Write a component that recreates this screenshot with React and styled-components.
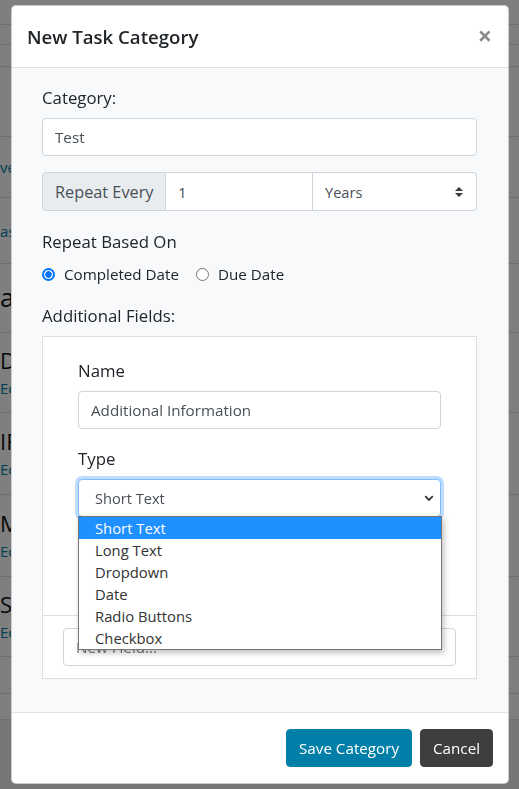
import React from "react";
import styled, { createGlobalStyle } from "styled-components";

const GlobalStyle = createGlobalStyle`
  html, body, #root {
    height: 100%;
  }
  body {
    margin: 0;
    font-family: "Open Sans", "Noto Sans", sans-serif;
    color: #212529;
    overflow: hidden;
  }
  * {
    box-sizing: border-box;
  }
`;

const rows = [
  { h: 25 },
  { h: 20 },
  { h: 22 },
  { h: 70 },
  { h: 61, link: "vents" },
  { h: 66, link: "asks" },
  { h: 69, heading: "asks", big: true },
  { h: 80, heading: "Daily", link: "Edit" },
  { h: 82, heading: "IFTA", link: "Edit" },
  { h: 82, heading: "Monthly", link: "Edit" },
  { h: 80, heading: "Semi", link: "Edit" },
  { h: 37 },
  { h: 26 },
];

const typeOptions = [
  "Short Text",
  "Long Text",
  "Dropdown",
  "Date",
  "Radio Buttons",
  "Checkbox",
];

export default function App() {
  return (
    <>
      <GlobalStyle />
      <Page>
        {rows.map((row, i) => (
          <BgRow key={i} style={{ height: row.h }}>
            {row.heading && <BgHeading $big={row.big}>{row.heading}</BgHeading>}
            {row.link && <BgLink>{row.link}</BgLink>}
          </BgRow>
        ))}
      </Page>
      <Backdrop />
      <Modal>
        <Header>
          <Title>New Task Category</Title>
          <Close>×</Close>
        </Header>
        <Body>
          <Label>Category:</Label>
          <Input defaultValue="Test" $mb={16} />
          <InputGroup>
            <Addon>Repeat Every</Addon>
            <GroupInput defaultValue="1" />
            <CustomSelect>
              <span>Years</span>
              <svg width="8" height="10" viewBox="0 0 4 5">
                <path d="M2 0L0 2h4zm0 5L0 3h4z" fill="#343a40" />
              </svg>
            </CustomSelect>
          </InputGroup>
          <Label>Repeat Based On</Label>
          <RadioRow>
            <RadioItem>
              <Radio $checked />
              Completed Date
            </RadioItem>
            <RadioItem>
              <Radio />
              Due Date
            </RadioItem>
          </RadioRow>
          <Label>Additional Fields:</Label>
          <Card>
            <CardBody>
              <Label>Name</Label>
              <Input defaultValue="Additional Information" $mb={18} />
              <Label>Type</Label>
              <SelectWrap>
                <FocusSelect>
                  <span>Short Text</span>
                  <svg width="10" height="7" viewBox="0 0 10 7">
                    <path
                      d="M1.2 1.2L5 5l3.8-3.8"
                      fill="none"
                      stroke="#333"
                      strokeWidth="1.8"
                    />
                  </svg>
                </FocusSelect>
                <OptionList>
                  {typeOptions.map((opt, i) => (
                    <OptionItem key={opt} $active={i === 0}>
                      {opt}
                    </OptionItem>
                  ))}
                </OptionList>
              </SelectWrap>
            </CardBody>
            <CardFooter>
              <Input placeholder="New Field..." />
            </CardFooter>
          </Card>
        </Body>
        <Footer>
          <Button $bg="#027fa8">Save Category</Button>
          <Button $bg="#3e3e3e">Cancel</Button>
        </Footer>
      </Modal>
    </>
  );
}

const Page = styled.div`
  min-height: 100%;
  background: #eeeeee;
  display: flex;
  flex-direction: column;
`;

const BgRow = styled.div`
  background: #fff;
  border-bottom: 1px solid #dcdfe3;
  display: flex;
  flex-direction: column;
  justify-content: center;
  gap: 4px;
`;

const BgHeading = styled.div`
  font-size: ${p => (p.$big ? "26px" : "22px")};
  font-weight: 500;
  line-height: 1.2;
  color: #111;
`;

const BgLink = styled.div`
  font-size: 15px;
  color: #027fa8;
`;

const Backdrop = styled.div`
  position: fixed;
  inset: 0;
  background: rgba(0, 0, 0, 0.5);
`;

const Modal = styled.div`
  position: fixed;
  top: 5px;
  left: 11px;
  width: 498px;
  background: #fff;
  border: 1px solid rgba(0, 0, 0, 0.2);
  border-radius: 5px;
  overflow: hidden;
  display: flex;
  flex-direction: column;
`;

const Header = styled.div`
  display: flex;
  align-items: center;
  justify-content: space-between;
  height: 62px;
  padding: 0 16px 0 15px;
  border-bottom: 1px solid #dee2e6;
`;

const Title = styled.h5`
  margin: 0;
  font-size: 18.6px;
  font-weight: 600;
  line-height: 30px;
  color: #212529;
`;

const Close = styled.span`
  font-size: 25px;
  font-weight: 700;
  line-height: 1;
  color: #000;
  opacity: 0.45;
  margin-top: -2px;
`;

const Body = styled.div`
  background: #f8f9fa;
  padding: 18px 31px 33px 30px;
  display: flex;
  flex-direction: column;
`;

const Label = styled.div`
  font-size: 16.8px;
  line-height: 24px;
  margin-bottom: 8px;
  color: #212529;
`;

const Input = styled.input`
  display: block;
  width: 100%;
  height: 38px;
  padding: 0 12px;
  font-family: inherit;
  font-size: 15.2px;
  color: #495057;
  background: #fff;
  border: 1px solid #ced4da;
  border-radius: 4px;
  margin-bottom: ${p => (p.$mb ? `${p.$mb}px` : "0")};
  outline: none;
  &::placeholder {
    color: #6c757d;
  }
`;

const InputGroup = styled.div`
  display: flex;
  height: 39px;
  margin-bottom: 19px;
`;

const Addon = styled.div`
  display: flex;
  align-items: center;
  width: 124px;
  padding: 0 12px;
  font-size: 16.3px;
  color: #495057;
  background: #e9ecef;
  border: 1px solid #ced4da;
  border-radius: 4px 0 0 4px;
  white-space: nowrap;
`;

const GroupInput = styled.input`
  width: 147px;
  height: 100%;
  padding: 0 12px;
  font-family: inherit;
  font-size: 15.2px;
  color: #495057;
  background: #fff;
  border: 1px solid #ced4da;
  border-left: none;
  outline: none;
`;

const CustomSelect = styled.div`
  flex: 1;
  display: flex;
  align-items: center;
  justify-content: space-between;
  padding: 0 13px 0 12px;
  font-size: 14.6px;
  color: #495057;
  background: #fff;
  border: 1px solid #ced4da;
  border-left: none;
  border-radius: 0 4px 4px 0;
`;

const RadioRow = styled.div`
  display: flex;
  gap: 17px;
  height: 24px;
  margin-bottom: 18px;
`;

const RadioItem = styled.label`
  display: flex;
  align-items: center;
  gap: 9px;
  font-size: 15.2px;
  color: #212529;
`;

const Radio = styled.span`
  width: 13px;
  height: 13px;
  border-radius: 50%;
  background: ${p =>
    p.$checked
      ? "radial-gradient(circle, #0075ff 0 3px, #fff 3.6px)"
      : "#fff"};
  border: ${p => (p.$checked ? "2px solid #0075ff" : "1px solid #767676")};
`;

const Card = styled.div`
  background: #fff;
  border: 1px solid rgba(0, 0, 0, 0.125);
  display: flex;
  flex-direction: column;
`;

const CardBody = styled.div`
  padding: 22px 35px 98px 35px;
`;

const SelectWrap = styled.div`
  position: relative;
`;

const FocusSelect = styled.div`
  display: flex;
  align-items: center;
  justify-content: space-between;
  height: 38px;
  padding: 0 6px 0 16px;
  font-size: 14.6px;
  color: #495057;
  background: #fff;
  border: 1px solid #80bdff;
  border-radius: 4px;
  box-shadow: 0 0 0 3px rgba(0, 123, 255, 0.25);
`;

const OptionList = styled.div`
  position: absolute;
  top: 37px;
  left: 0;
  width: 364px;
  background: #fff;
  border: 1px solid #767676;
  box-shadow: 2px 3px 6px rgba(0, 0, 0, 0.25);
  z-index: 2;
`;

const OptionItem = styled.div`
  height: 22px;
  line-height: 22px;
  padding-left: 16px;
  font-size: 14.8px;
  color: ${p => (p.$active ? "#fff" : "#333")};
  background: ${p => (p.$active ? "#1e90ff" : "#fff")};
`;

const CardFooter = styled.div`
  padding: 12px 20px;
  border-top: 1px solid rgba(0, 0, 0, 0.125);
  background: #fff;
`;

const Footer = styled.div`
  display: flex;
  justify-content: flex-end;
  gap: 8px;
  padding: 16px 15px 16px 16px;
  border-top: 1px solid #dee2e6;
`;

const Button = styled.button`
  height: 38px;
  padding: 0 12px;
  font-family: inherit;
  font-size: 15.2px;
  color: #fff;
  background: ${p => p.$bg};
  border: 1px solid ${p => p.$bg};
  border-radius: 4px;
`;
